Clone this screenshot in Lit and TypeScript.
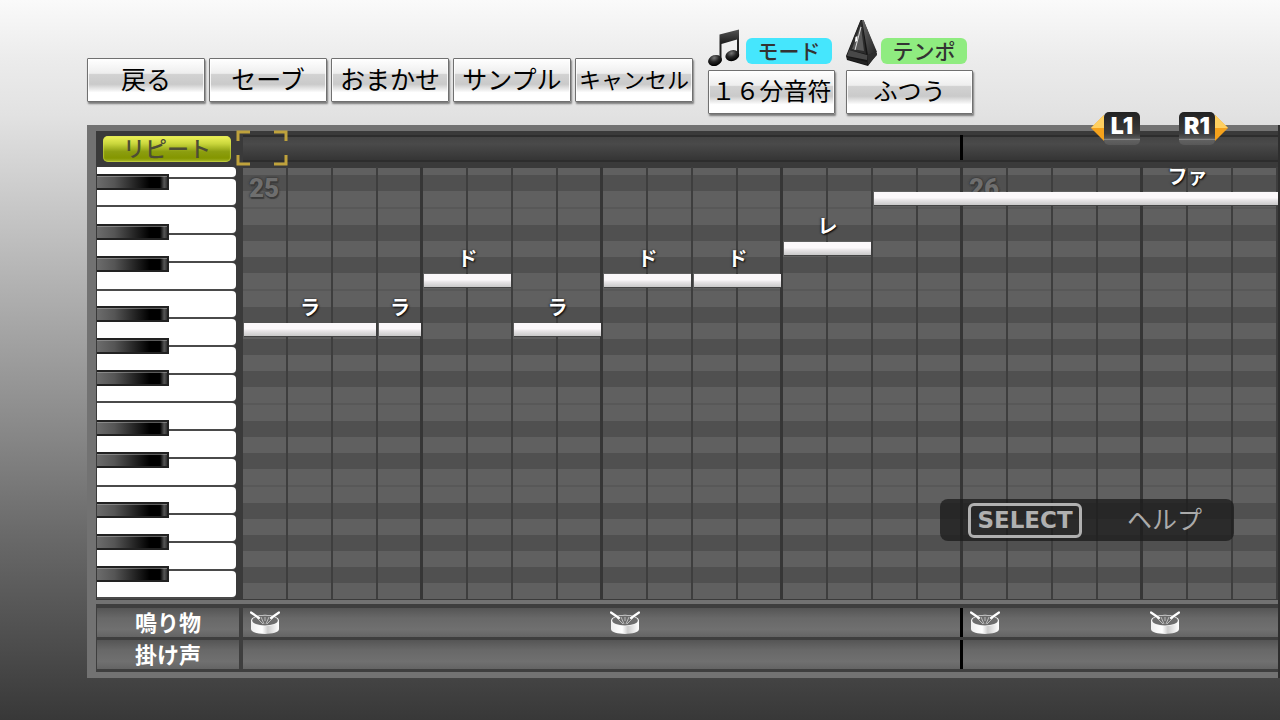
import { LitElement, html, css, svg } from "lit";
import { customElement } from "lit/decorators.js";
import { styleMap } from "lit/directives/style-map.js";

type Note = { start: number; length: number; row: number; name: string };

const CELL = 45;
const CELLS_PER_BAR = 16;

const COMMANDS = ["戻る", "セーブ", "おまかせ", "サンプル", "キャンセル"];

// One octave of lanes from top to bottom; "e" marks the thin seam between two neighbouring white keys.
const OCTAVE = "wbwbwewbwbwbwe";
const LANES = ("Wbwe" + OCTAVE + OCTAVE + "wbwbwewbwbwbw").slice(0, 31);

const BLACK_KEYS = [0, 50, 82, 132, 164, 196, 246, 278, 328, 360, 392];

const NOTES: Note[] = [
  { start: 0, length: 3, row: 156, name: "ラ" },
  { start: 3, length: 1, row: 156, name: "ラ" },
  { start: 4, length: 2, row: 107, name: "ド" },
  { start: 6, length: 2, row: 156, name: "ラ" },
  { start: 8, length: 2, row: 107, name: "ド" },
  { start: 10, length: 2, row: 107, name: "ド" },
  { start: 12, length: 2, row: 75, name: "レ" },
  { start: 14, length: 14, row: 25, name: "ファ" },
];

const DRUMS = [0, 8, 16, 20];
const BARS = [
  { cell: 0, no: 25 },
  { cell: CELLS_PER_BAR, no: 26 },
];

const left = (cell: number) => styleMap({ left: `${cell * CELL}px` });

const noteIcon = svg`
  <defs><radialGradient id="nh" cx=".5" cy=".25" r=".7"><stop offset="0" stop-color="#777"/><stop offset=".5" stop-color="#262626"/><stop offset="1" stop-color="#000"/></radialGradient>
  <linearGradient id="nb" x2="0" y2="1"><stop offset="0" stop-color="#555"/><stop offset=".4" stop-color="#222"/><stop offset="1" stop-color="#222"/></linearGradient></defs>
  <path d="M11.500 5.500 31 .5V27H29V10.500L13.500 15V32H11.500Z" fill="url(#nb)"/>
  <ellipse cx="7" cy="31.500" rx="7" ry="5.400" transform="rotate(-18 7 31.500)" fill="url(#nh)"/>
  <ellipse cx="24.300" cy="26.700" rx="7" ry="5.400" transform="rotate(-18 24.300 26.700)" fill="url(#nh)"/>`;

const metronomeIcon = svg`
  <defs><linearGradient id="mf" x2="1" y2="1"><stop offset="0" stop-color="#666"/><stop offset="1" stop-color="#222"/></linearGradient></defs>
  <path d="M14.500 1 17.500 1 31 35 22 47 1 41 0 37Z" fill="#161616"/>
  <path d="M14.500 2 3 31 20 35 16 2Z" fill="#2c2c2c"/>
  <path d="M14.800 6 6 30 18 32Z" fill="#5a5a5a"/>
  <path d="M16 1 22 36 31 33 17.500 1Z" fill="url(#mf)"/>
  <path d="M15 8 9 31" stroke="#ddd" stroke-width="1"/>
  <path d="M9.500 18 11.500 17 11 22 9 23Z" fill="#fff"/>
  <path d="M3 31 21 36 21 41 1 37Z" fill="#484848"/>
  <path d="M1 38 21 43V46L1 40Z" fill="#222"/>
  <path d="M21 36 30 33 31 36 22 46Z" fill="#2c2c2c"/>`;

const drumIcon = html`<svg viewBox="0 0 30 24" width="30" height="24" aria-hidden="true">
  <defs><linearGradient id="db"><stop offset="0" stop-color="#eee"/><stop offset=".4" stop-color="#fff"/><stop offset=".6" stop-color="#ccc"/><stop offset="1" stop-color="#fff"/></linearGradient></defs>
  <path d="M1 9V18C1 24.500 29 24.500 29 18V9Z" fill="url(#db)"/>
  <ellipse cx="15" cy="9.500" rx="14" ry="5.800" fill="#f4f4f4"/>
  <ellipse cx="15" cy="9.500" rx="12.800" ry="4.900" fill="#6c6c6c"/>
  <path d="M7 7 13 13M11 6 14 13M19 6 16 13M23 7 17 13M15 6V10" stroke="#bbb" stroke-width="1"/>
  <path d="M1 1.500 9 7M29 1.500 21 7" stroke="#fff" stroke-width="2.200" stroke-linecap="round"/>
</svg>`;

@customElement("app-root")
export class AppRoot extends LitElement {
  static styles = css`
    :host {
      display: block;
      min-height: 100vh;
      box-sizing: border-box;
      overflow: hidden;
      padding: 19px 0 42px 87px;
      font-family: "Noto Sans CJK JP", sans-serif;
      background: linear-gradient(#fafafa 0, #ececec 8%, #e2e2e2 16%, #c9c9c9 28%, #8c8c8c 58%, #6a6a6a 74%, #4c4c4c 90%, #424242 95%, #383838 100%);
    }
    button {
      font: inherit;
      padding: 0;
      margin: 0;
    }
    .toolbar {
      display: flex;
      align-items: flex-end;
      gap: 15px;
      height: 95px;
    }
    .commands {
      display: flex;
      gap: 4px;
      padding-bottom: 12px;
    }
    .settings {
      display: flex;
      align-items: flex-end;
      gap: 10px;
    }
    .setting {
      display: flex;
      flex-direction: column;
      gap: 3px;
    }
    .caption {
      display: flex;
      align-items: flex-end;
      justify-content: flex-end;
      gap: 6px;
      padding-right: 4px;
    }
    .caption.tempo {
      gap: 4px;
      padding-right: 6px;
    }
    .chip {
      width: 86px;
      height: 26px;
      margin-bottom: 3px;
      border-radius: 6px;
      background: #45e6fd;
      color: #333;
      font-size: 21px;
      font-weight: 500;
      line-height: 24px;
      text-align: center;
    }
    .tempo .chip {
      background: #8fec80;
    }
    .glossy {
      width: 118px;
      height: 44px;
      border: 1px solid #707070;
      border-radius: 1px;
      background: linear-gradient(#fff 0, #eee 34%, #d2d2d2 37%, #cacaca 60%, #fff 80%, #fff 100%);
      box-shadow: 1px 2px 2px #0007, inset 0 0 0 1px #fffc;
      color: #000;
      font-size: 25px;
      font-weight: 400;
      line-height: 36px;
      white-space: nowrap;
    }
    .glossy > span {
      display: block;
      margin-top: -4px;
    }
    .glossy.long {
      font-size: 22px;
    }
    .setting .glossy {
      width: 127px;
      font-size: 24px;
    }
    .panel {
      position: relative;
      margin-top: 11px;
      padding: 6px 0 6px 9px;
      background: #727272;
      border-right: 2px solid #2e2e2e;
    }
    .ruler,
    .roll {
      display: flex;
      background: #3a3a3a;
      padding-left: 1px;
    }
    .ruler {
      height: 36px;
    }
    .side {
      flex: none;
      width: 146px;
      box-sizing: border-box;
    }
    .repeat {
      display: block;
      width: 128px;
      height: 26px;
      margin: 5px 0 0 6px;
      border: 0;
      border-radius: 5px;
      background: linear-gradient(#f0f45a 0, #c9d63c 30%, #8c9e10 60%, #849600 85%, #a5b62c 100%);
      box-shadow: inset 0 0 1px 1px #d8e05088;
      color: #4d4d35;
      font-size: 22px;
      font-weight: 500;
      line-height: 22px;
    }
    .repeat > span {
      display: block;
      margin-top: -4px;
    }
    .timeline {
      position: relative;
      flex: 1;
      min-width: 0;
      margin: 4px 0 5px;
      border-block: 2px solid #2d2d2d;
      background: linear-gradient(#444, #4a4a4a 30%, #353535);
    }
    .cursor {
      position: absolute;
      left: -7px;
      top: -7px;
    }
    .barline {
      position: absolute;
      top: 0;
      bottom: 0;
      width: 3px;
      margin-left: -3px;
      background: #000;
    }
    .timeline .barline {
      top: -2px;
    }
    .roll {
      padding-bottom: 1px;
    }
    .keys {
      position: relative;
    }
    .white {
      width: 139px;
      height: 28px;
      box-sizing: border-box;
      border-bottom: 2px solid #4a4a4a;
      border-radius: 0 5px 5px 0;
      background: #3a3a3a;
    }
    .white::before {
      content: "";
      display: block;
      height: 100%;
      border-radius: 0 4px 4px 0;
      background: #fff;
    }
    .white.first {
      height: 12px;
    }
    .black {
      position: absolute;
      left: 0;
      width: 72px;
      height: 16px;
      box-sizing: border-box;
      border: 2px solid #222;
      border-left: 0;
      background: linear-gradient(90deg, #6c6c6c 0, #555 25%, #000 75%, #000 90%, #555 96%, #333 100%);
      box-shadow: inset 0 1px #aaa8;
    }
    .grid {
      position: relative;
      flex: 1;
      min-width: 0;
      overflow-x: clip;
      padding-top: 1px;
    }
    .lane {
      height: 16px;
      background: #606060;
    }
    .lane.b {
      background: #505050;
    }
    .lane.e {
      height: 2px;
      background: #585858;
    }
    .lane.W {
      height: 7px;
    }
    .lines {
      position: absolute;
      inset: 0;
      background: repeating-linear-gradient(90deg, #0000 0 177px, #363636 177px 180px),
        repeating-linear-gradient(90deg, #0000 0 43px, #3e3e3e 43px 45px);
    }
    .barno {
      position: absolute;
      top: 5px;
      margin-left: 6px;
      color: #6e6e6e;
      font: 900 26px/32px Roboto, sans-serif;
      text-shadow: 0 0 2px #333, 1px 2px 1px #3c3c3c, 0 0 2px #333;
    }
    .note {
      position: absolute;
      height: 13px;
      margin-left: 1px;
      background: linear-gradient(#fbf8fa 0 45%, #e9e6e8 60%, #c9c9c9 100%);
      box-shadow: 0 1px #444;
      display: flex;
      justify-content: center;
    }
    .name {
      margin-top: -30px;
      height: 28px;
      color: #fff;
      font-size: 20px;
      font-weight: 700;
      line-height: 28px;
      text-shadow: 1px 1px 2px #000, -1px 0 2px #0008;
    }
    .tracks {
      display: grid;
      grid-template-columns: 142px 1fr;
      gap: 3px 4px;
      margin-top: 4px;
      padding: 4px 0 3px 1px;
      background: #3e3e3e;
    }
    .label,
    .track {
      height: 29px;
      background: linear-gradient(#555, #686868 35%, #707070 75%, #646464);
    }
    .label {
      color: #fff;
      font-size: 22px;
      font-weight: 700;
      line-height: 26px;
      text-align: center;
    }
    .track {
      position: relative;
      min-width: 0;
      overflow: hidden;
    }
    .drum {
      position: absolute;
      top: 3px;
      margin-left: 7px;
    }
    .shoulder {
      position: absolute;
      top: -13px;
      display: flex;
      align-items: flex-start;
      border: 0;
      background: none;
    }
    .shoulder.prev {
      right: 138px;
    }
    .shoulder.next {
      right: 50px;
    }
    .cap {
      width: 36px;
      height: 33px;
      border-radius: 5px;
      background: linear-gradient(#222 0, #3c3c3c 65%, #555 80%, #999 82%, #606060 86%, #585858 100%);
      color: #fff;
      font: 900 23px/29px Inter, "Liberation Sans", sans-serif;
      text-align: center;
    }
    .arrow {
      margin-top: 3px;
    }
    .help {
      position: absolute;
      right: 44px;
      top: 374px;
      display: flex;
      align-items: center;
      width: 294px;
      height: 42px;
      padding: 0 0 0 28px;
      box-sizing: border-box;
      border: 0;
      border-radius: 8px;
      background: #1c1c1cc8;
      color: #aaa;
    }
    .select {
      width: 114px;
      height: 35px;
      box-sizing: border-box;
      border: 3px solid #b0b0b0;
      border-radius: 6px;
      color: #b0b0b0;
      font: 700 23px/29px "DejaVu Sans", sans-serif;
      text-align: center;
    }
    .word {
      margin-left: 45px;
      font-size: 25px;
      line-height: 38px;
      padding-bottom: 4px;
    }
    svg {
      display: block;
    }
  `;

  render() {
    return html`
      <header class="toolbar">
        <nav class="commands">
          ${COMMANDS.map((c) => html`<button class="glossy ${c.length > 4 ? "long" : ""}"><span>${c}</span></button>`)}
        </nav>
        <div class="settings">
          <div class="setting">
            <div class="caption">
              <svg width="32" height="38" viewBox="0 0 32 38" aria-hidden="true">${noteIcon}</svg>
              <span class="chip" id="mode">モード</span>
            </div>
            <button class="glossy" aria-describedby="mode"><span>１６分音符</span></button>
          </div>
          <div class="setting">
            <div class="caption tempo">
              <svg width="31" height="48" viewBox="0 0 31 48" aria-hidden="true">${metronomeIcon}</svg>
              <span class="chip" id="tempo">テンポ</span>
            </div>
            <button class="glossy" aria-describedby="tempo"><span>ふつう</span></button>
          </div>
        </div>
      </header>

      <main class="panel">
        <div class="ruler">
          <div class="side"><button class="repeat"><span>リピート</span></button></div>
          <div class="timeline">
            <svg class="cursor" width="52" height="36" viewBox="0 0 52 36" aria-hidden="true">
              <path d="M2 11V2H14M38 2H50V11M50 25V34H38M14 34H2V25" fill="none" stroke="#bfa23c" stroke-width="3" />
            </svg>
            <span class="barline" style=${left(CELLS_PER_BAR)}></span>
          </div>
        </div>

        <div class="roll">
          <div class="side keys">
            ${Array.from({ length: 16 }, (_, i) => html`<div class="white ${i ? "" : "first"}"></div>`)}
            ${BLACK_KEYS.map((y) => html`<div class="black" style=${styleMap({ top: `${y + 7}px` })}></div>`)}
          </div>
          <div class="grid">
            ${[...LANES].map((k) => html`<div class="lane ${k}"></div>`)}
            <div class="lines"></div>
            ${BARS.map((b) => html`<span class="barno" style=${left(b.cell)}>${b.no}</span>`)}
            ${NOTES.map(
              (n) => html`<div
                class="note"
                style=${styleMap({ left: `${n.start * CELL}px`, top: `${n.row}px`, width: `${n.length * CELL - 3}px` })}
              >
                <span class="name">${n.name}</span>
              </div>`
            )}
          </div>
        </div>

        <div class="tracks">
          <div class="label">鳴り物</div>
          <div class="track">
            <span class="barline" style=${left(CELLS_PER_BAR)}></span>
            ${DRUMS.map((d) => html`<span class="drum" style=${left(d)}>${drumIcon}</span>`)}
          </div>
          <div class="label">掛け声</div>
          <div class="track"><span class="barline" style=${left(CELLS_PER_BAR)}></span></div>
        </div>

        <button class="shoulder prev">
          <svg class="arrow" width="13" height="26" viewBox="0 0 13 26" aria-hidden="true">
            <path d="M13 0V26L0 13Z" fill="#f5a21c" /><path d="M13 0V13H0Z" fill="#ffd060" />
          </svg>
          <span class="cap">L1</span>
        </button>
        <button class="shoulder next">
          <span class="cap">R1</span>
          <svg class="arrow" width="13" height="26" viewBox="0 0 13 26" aria-hidden="true">
            <path d="M0 0V26L13 13Z" fill="#f5a21c" /><path d="M0 0V13H13Z" fill="#ffd060" />
          </svg>
        </button>

        <button class="help"><span class="select">SELECT</span><span class="word">ヘルプ</span></button>
      </main>
    `;
  }
}
